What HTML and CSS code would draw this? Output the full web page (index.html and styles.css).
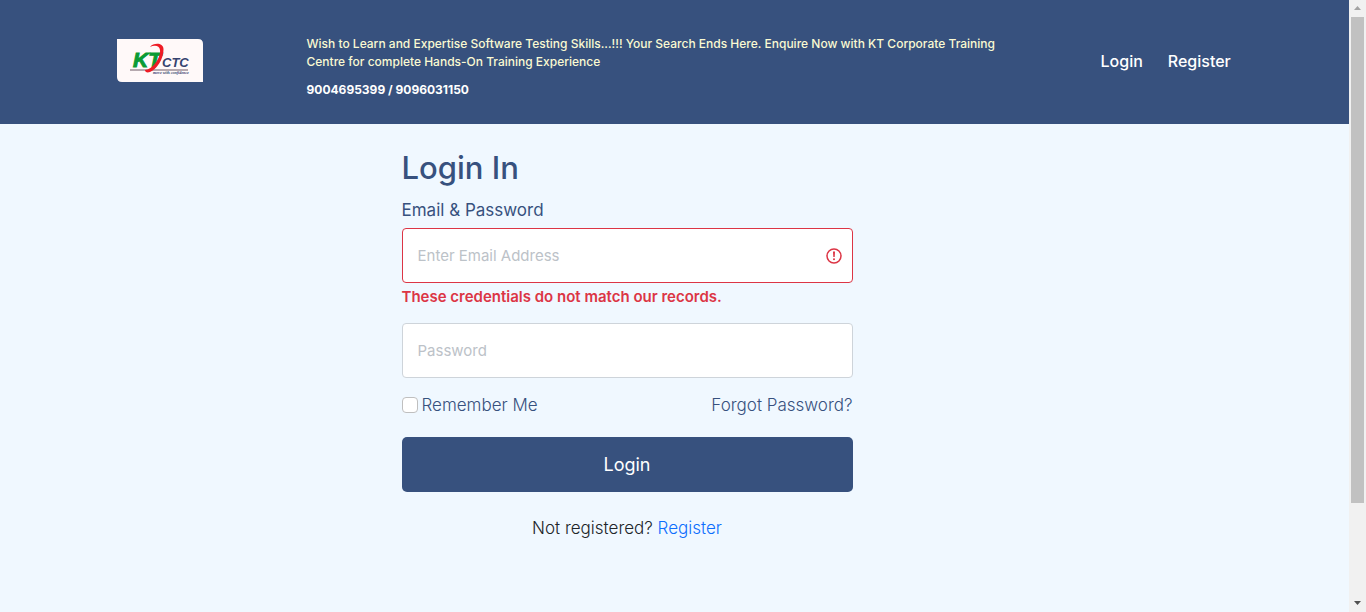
FILE: index.html
```html
<!DOCTYPE html>
<html lang="en">
<head>
<meta charset="utf-8">
<meta name="viewport" content="width=device-width, initial-scale=1">
<title>Login - KT CTC</title>
<link rel="stylesheet" href="styles.css">
</head>
<body>
<div class="shell">
  <div class="page">
    <header class="header">
      <div class="container header-row">
        <a class="logo" href="#" aria-label="KT CTC home">
          <svg viewBox="0 0 86 43" width="86" height="43" aria-hidden="true">
            <path fill="#fff9f9" d="M0 0H81Q86 0 86 5V43H5Q0 43 0 38Z"/>
            <path d="M13 31H71" stroke="#6f5a66" stroke-width="1"/>
            <text class="logo-kt" x="16" y="28">KT</text>
            <path fill="#ee1c25" d="M33 8C36 4 46 3 46.500 10C47 20 39 31 33 33C30 34 28 33 28 31C35 31 44 19 43 11C42.500 6 37 6 33 8Z"/>
            <text class="logo-ctc" x="45" y="28">CTC</text>
            <text class="logo-tag" x="36" y="35">move with confidence</text>
          </svg>
        </a>
        <div class="notice">
          <p class="notice-text">Wish to Learn and Expertise Software Testing Skills...!!! Your Search Ends Here. Enquire Now with KT Corporate Training Centre for complete Hands-On Training Experience</p>
          <p class="notice-phone">9004695399 / 9096031150</p>
        </div>
        <nav class="nav">
          <a href="#">Login</a>
          <a href="#">Register</a>
        </nav>
      </div>
    </header>
    <main class="container main-row">
      <form class="login-form">
        <h1 class="title">Login In</h1>
        <label class="label" for="email">Email &amp; Password</label>
        <div class="field">
          <input class="input input-invalid" id="email" type="email" placeholder="Enter Email Address" aria-describedby="email-error">
          <svg class="alert-icon" viewBox="0 0 16 16" width="16" height="16" aria-hidden="true">
            <circle cx="8" cy="8" r="7" fill="none" stroke="#dc3545" stroke-width="1.500"/>
            <path d="M7 3.500H9L8.700 9H7.300Z" fill="#dc3545"/>
            <circle cx="8" cy="11.200" r="1" fill="#dc3545"/>
          </svg>
        </div>
        <p class="error" id="email-error">These credentials do not match our records.</p>
        <input class="input" id="password" type="password" placeholder="Password" aria-label="Password">
        <div class="options">
          <label class="remember" for="remember"><input class="checkbox" id="remember" type="checkbox">Remember Me</label>
          <a class="forgot" href="#">Forgot Password?</a>
        </div>
        <button class="submit" type="button">Login</button>
        <p class="signup">Not registered? <a href="#">Register</a></p>
      </form>
    </main>
  </div>
  <div class="scrollbar" aria-hidden="true">
    <svg viewBox="0 0 17 17" width="17" height="17"><path fill="#a3a3a3" d="M5 10L8.500 6L12 10Z"/></svg>
    <div class="track"><div class="thumb"></div></div>
    <svg viewBox="0 0 17 17" width="17" height="17"><path fill="#505050" d="M5 6H12L8.500 10Z"/></svg>
  </div>
</div>
</body>
</html>
```

FILE: styles.css
```css
*, *::before, *::after { box-sizing: border-box; }

body {
  margin: 0;
  font-family: Inter, "Open Sans", sans-serif;
  font-size: 16px;
  line-height: 24px;
  color: #212529;
  background: #f0f8ff;
}

h1, p { margin: 0; }
a { text-decoration: none; }

.shell { display: flex; min-height: 100vh; }
.page { flex: 1; min-width: 0; }

.container {
  display: grid;
  grid-template-columns: repeat(12, minmax(0, 1fr));
  column-gap: 24px;
  width: 100%;
  max-width: 1140px;
  margin: 0 auto;
  padding: 0 12px;
}

.header { padding: 35px 0 25px; color: #fff; background: #37517e; }
.logo { grid-column: span 2; padding-top: 4px; }
.logo svg { display: block; }
.logo-kt { font: italic 700 21px "Liberation Sans", sans-serif; fill: #0a9b35; stroke: #0a9b35; }
.logo-ctc { font: italic 700 13px "Liberation Sans", sans-serif; fill: #35436f; }
.logo-tag { font: italic 700 4px "Liberation Serif", serif; fill: #35436f; }

.notice { grid-column: span 8; display: grid; gap: 10px; align-content: start; padding-right: 24px; line-height: 18px; }
.notice-text { font-size: 12px; font-weight: 500; color: #fafad2; }
.notice-phone { font-size: 12px; font-weight: 700; }

.nav { grid-column: span 2; display: flex; gap: 25px; padding: 14px 0 0 34px; }
.nav a { font-weight: 500; color: #fff; }

.login-form { grid-column: 4 / span 5; padding: 24px 0; color: #37517e; }
.title { margin-bottom: 10px; font-size: 31px; line-height: 40px; font-weight: 500; }
.label { display: block; margin-bottom: 6px; font-size: 17px; }
.field { position: relative; }

.input {
  display: block;
  width: 100%;
  height: 55px;
  padding: 0 15px;
  border: 1px solid #ced4da;
  border-radius: 4px;
  font: inherit;
  font-size: 15px;
  background: #fff;
}
.input::placeholder { color: #bcc2c8; opacity: 1; }
.input-invalid { padding-right: 40px; border-color: #dc3545; }
.alert-icon { position: absolute; top: 20px; right: 11px; }
.error { margin: 4px 0 16px; font-size: 15px; line-height: 20px; font-weight: 600; color: #dc3545; }

.options { display: flex; justify-content: space-between; margin: 15px 0 20px; font-size: 17px; font-weight: 300; }
.remember { display: flex; align-items: center; gap: 4px; }
.checkbox { appearance: none; width: 16px; height: 16px; margin: 0; border: 1px solid #bfbfbf; border-radius: 4px; background: #fff; }
.checkbox:checked { background: #37517e; }
.forgot { color: #37517e; }

.submit {
  display: block;
  width: 100%;
  height: 55px;
  border: 0;
  border-radius: 5px;
  font: inherit;
  font-size: 18px;
  color: #fff;
  background: #37517e;
}
.signup { margin-top: 24px; text-align: center; font-size: 17px; font-weight: 300; color: #212529; }
.signup a { color: #0d6efd; }

.scrollbar { display: flex; flex-direction: column; flex: none; width: 17px; background: #f1f1f1; }
.scrollbar svg { display: block; }
.track { flex: 1; padding: 0 2px; }
.thumb { height: 84%; background: #c1c1c1; }
```
